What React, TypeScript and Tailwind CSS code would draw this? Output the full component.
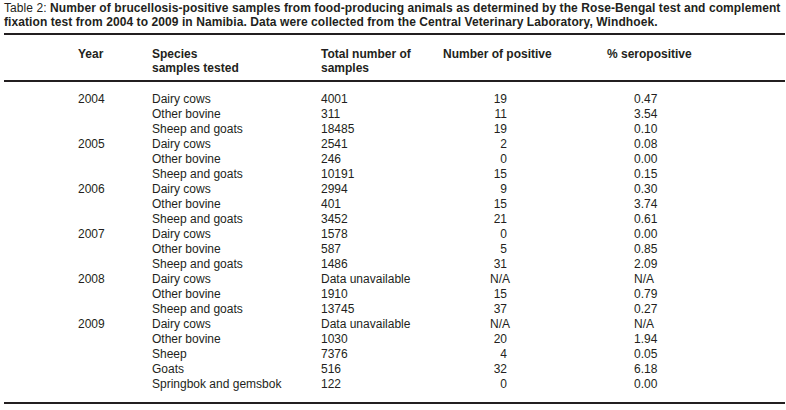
import React from "react";

type Row = { year?: string; species: string; total: string; pos: string; pct: string };

const rows: Row[] = [
  { year: "2004", species: "Dairy cows", total: "4001", pos: "19", pct: "0.47" },
  { species: "Other bovine", total: "311", pos: "11", pct: "3.54" },
  { species: "Sheep and goats", total: "18485", pos: "19", pct: "0.10" },
  { year: "2005", species: "Dairy cows", total: "2541", pos: "2", pct: "0.08" },
  { species: "Other bovine", total: "246", pos: "0", pct: "0.00" },
  { species: "Sheep and goats", total: "10191", pos: "15", pct: "0.15" },
  { year: "2006", species: "Dairy cows", total: "2994", pos: "9", pct: "0.30" },
  { species: "Other bovine", total: "401", pos: "15", pct: "3.74" },
  { species: "Sheep and goats", total: "3452", pos: "21", pct: "0.61" },
  { year: "2007", species: "Dairy cows", total: "1578", pos: "0", pct: "0.00" },
  { species: "Other bovine", total: "587", pos: "5", pct: "0.85" },
  { species: "Sheep and goats", total: "1486", pos: "31", pct: "2.09" },
  { year: "2008", species: "Dairy cows", total: "Data unavailable", pos: "N/A", pct: "N/A" },
  { species: "Other bovine", total: "1910", pos: "15", pct: "0.79" },
  { species: "Sheep and goats", total: "13745", pos: "37", pct: "0.27" },
  { year: "2009", species: "Dairy cows", total: "Data unavailable", pos: "N/A", pct: "N/A" },
  { species: "Other bovine", total: "1030", pos: "20", pct: "1.94" },
  { species: "Sheep", total: "7376", pos: "4", pct: "0.05" },
  { species: "Goats", total: "516", pos: "32", pct: "6.18" },
  { species: "Springbok and gemsbok", total: "122", pos: "0", pct: "0.00" },
];

export default function App() {
  return (
    <div
      className="w-[786px] h-[410px] bg-white text-[#231f20] pl-[4px] pr-[1px] overflow-hidden"
      style={{ fontFamily: '"Liberation Sans", Arial, sans-serif' }}
    >
      <div className="pt-[1px] text-[12px] leading-[14px] whitespace-nowrap tracking-[0.08px]">
        Table 2:{" "}
        <span className="font-bold">
          Number of brucellosis-positive samples from food-producing animals as determined by the Rose-Bengal test and complement
          <br />
          fixation test from 2004 to 2009 in Namibia. Data were collected from the Central Veterinary Laboratory, Windhoek.
        </span>
      </div>
      <div className="mt-[4px] h-[2px] bg-[#231f20]" />
      <div className="mt-[12px] grid grid-cols-[74px_74px_169px_122px_164px_1fr] text-[12px] leading-[14px] font-bold">
        <div />
        <div>Year</div>
        <div>
          Species
          <br />
          samples tested
        </div>
        <div>
          Total number of
          <br />
          samples
        </div>
        <div>Number of positive</div>
        <div>% seropositive</div>
      </div>
      <div className="mt-[5px] h-[2px] bg-[#231f20]" />
      <div className="mt-[10px] text-[12px] leading-[15px]">
        {rows.map((r, i) => (
          <div key={i} className="grid grid-cols-[74px_74px_169px_122px_164px_1fr] whitespace-nowrap">
            <div />
            <div>{r.year ?? ""}</div>
            <div>{r.species}</div>
            <div>{r.total}</div>
            <div className="flex">
              <div className={r.pos === "N/A" ? "w-[67px] text-right" : "w-[64px] text-right"}>{r.pos}</div>
            </div>
            <div className="pl-[27px]">{r.pct}</div>
          </div>
        ))}
      </div>
      <div className="mt-[10px] h-[2px] bg-[#231f20]" />
    </div>
  );
}
